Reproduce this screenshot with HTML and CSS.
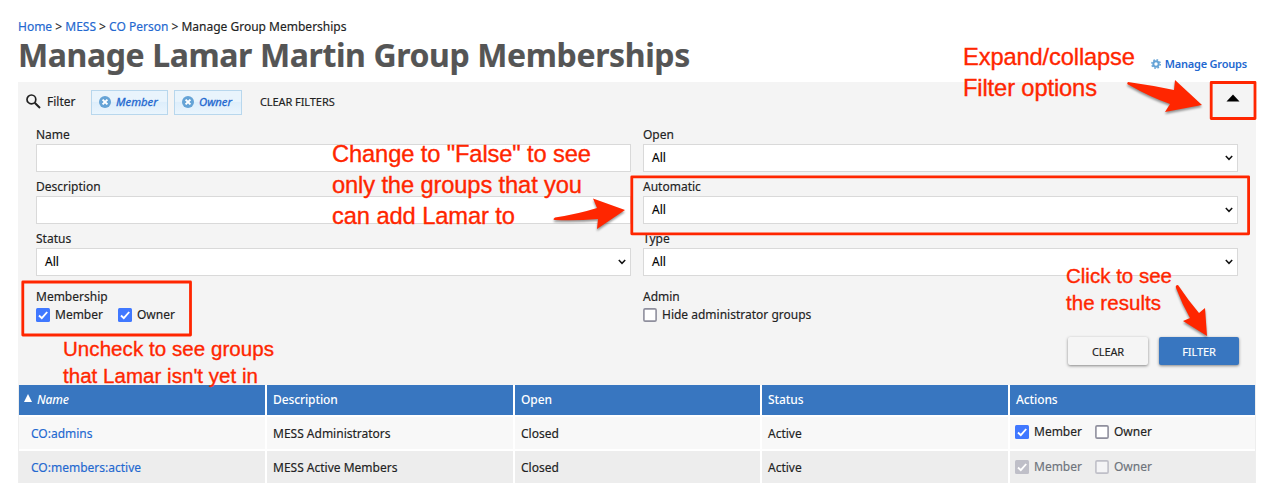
FILE: index.html
```html
<!DOCTYPE html>
<html lang="en">
<head>
<meta charset="utf-8">
<title>Manage Group Memberships</title>
<link rel="stylesheet" href="styles.css">
</head>
<body>
<svg class="defs" width="0" height="0" aria-hidden="true">
  <symbol id="on" viewBox="0 0 14 14"><rect width="14" height="14" rx="1.5" fill="currentColor"/><path d="M3 7.5l2.8 2.7L11.2 4" fill="none" stroke="#fff" stroke-width="1.9"/></symbol>
  <symbol id="off" viewBox="0 0 14 14"><rect x=".9" y=".9" width="12.2" height="12.2" rx="1.2" fill="var(--fill,#fff)" stroke="currentColor" stroke-width="1.6"/></symbol>
  <symbol id="chev" viewBox="0 0 8 6"><path d="M.8 1L4 4.3 7.2 1" fill="none" stroke="#111" stroke-width="1.5"/></symbol>
  <symbol id="close" viewBox="0 0 12 12"><circle cx="6" cy="6" r="6" fill="#65a3d6"/><path d="M3.6 3.6l4.8 4.8M8.4 3.6L3.6 8.4" stroke="#fff" stroke-width="2"/></symbol>
</svg>
<main class="page">
  <nav class="crumbs"><a>Home</a> &gt; <a>MESS</a> &gt; <a>CO Person</a> &gt; <span>Manage Group Memberships</span></nav>
  <header class="head">
    <h1>Manage Lamar Martin Group Memberships</h1>
    <a class="manage"><svg width="10" height="10" viewBox="0 0 10 10"><circle cx="5" cy="5" r="2.7" fill="none" stroke="#65a3d6" stroke-width="2"/><circle cx="5" cy="5" r="4.2" fill="none" stroke="#65a3d6" stroke-width="1.5" stroke-dasharray="1.65 1.65"/></svg>Manage Groups</a>
  </header>
  <section class="panel">
    <div class="bar">
      <svg class="search" width="15" height="15" viewBox="0 0 15 15"><circle cx="5.4" cy="5.4" r="4.4" fill="none" stroke="#222" stroke-width="1.7"/><path d="M8.7 8.7l5.3 5.3" stroke="#222" stroke-width="2"/></svg>
      <span class="filter-label">Filter</span>
      <span class="chip member"><svg width="12" height="12"><use href="#close"/></svg>Member</span>
      <span class="chip"><svg width="12" height="12"><use href="#close"/></svg>Owner</span>
      <span class="clear-all">CLEAR FILTERS</span>
      <svg class="caret" width="14" height="8" viewBox="0 0 14 8"><path d="M7 .5L13.5 7.5H.5z" fill="#000"/></svg>
    </div>
    <div class="fields">
      <div class="field"><label>Name</label><div class="box"></div></div>
      <div class="field"><label>Open</label><div class="box">All<svg width="8" height="6"><use href="#chev"/></svg></div></div>
      <div class="field"><label>Description</label><div class="box"></div></div>
      <div class="field"><label>Automatic</label><div class="box">All<svg width="8" height="6"><use href="#chev"/></svg></div></div>
      <div class="field"><label>Status</label><div class="box">All<svg width="8" height="6"><use href="#chev"/></svg></div></div>
      <div class="field"><label>Type</label><div class="box">All<svg width="8" height="6"><use href="#chev"/></svg></div></div>
      <div class="group"><label>Membership</label><div class="checks"><span class="check"><svg class="blue"><use href="#on"/></svg>Member</span><span class="check"><svg class="blue"><use href="#on"/></svg>Owner</span></div></div>
      <div class="group"><label>Admin</label><div class="checks"><span class="check"><svg><use href="#off"/></svg>Hide administrator groups</span></div></div>
    </div>
    <div class="buttons"><span class="btn">CLEAR</span><span class="btn primary">FILTER</span></div>
  </section>
  <section class="table">
    <div class="row th"><span class="sorted"><svg width="8" height="8" viewBox="0 0 8 8"><path d="M4 0l4 8H0z" fill="#fff"/></svg><i>Name</i></span><span>Description</span><span>Open</span><span>Status</span><span>Actions</span></div>
    <div class="row first"><span class="name">CO:admins</span><span>MESS Administrators</span><span>Closed</span><span>Active</span><span class="actions"><span class="check"><svg class="blue"><use href="#on"/></svg>Member</span><span class="check"><svg><use href="#off"/></svg>Owner</span></span></div>
    <div class="row alt"><span class="name">CO:members:active</span><span>MESS Active Members</span><span>Closed</span><span>Active</span><span class="actions disabled"><span class="check"><svg><use href="#on"/></svg>Member</span><span class="check"><svg><use href="#off"/></svg>Owner</span></span></div>
  </section>
</main>
<svg class="notes" width="1267" height="483" viewBox="0 0 1267 483">
  <g class="frames">
    <rect x="1211.2" y="82.5" width="43.8" height="36"/>
    <rect x="631.8" y="176.8" width="616.8" height="57"/>
    <rect x="22.8" y="282" width="167.7" height="53"/>
  </g>
  <g class="arrows">
    <path d="M1128 82Q1126 84 1129 85Q1150 97 1170 104L1165 112 1202 105 1175 80 1174 90Q1150 85 1128 82Z"/>
    <path d="M555 217.500Q552 219.500 555 220Q575 221 598 219L597 229 625 210 593 198.500 597 208Q578 214 555 217.500Z"/>
    <path d="M1178 285Q1175 285 1176 288Q1182 304 1190 318L1183 321 1207 336 1205 308 1199 313Q1188 300 1178 285Z"/>
  </g>
  <g class="big" lengthAdjust="spacing">
    <text x="963" y="65" textLength="172">Expand/collapse</text>
    <text x="963" y="96" textLength="134">Filter options</text>
    <text x="332" y="162" textLength="259">Change to "False" to see</text>
    <text x="332" y="193" textLength="250">only the groups that you</text>
    <text x="332" y="224" textLength="183">can add Lamar to</text>
  </g>
  <g class="small">
    <text x="1066" y="283" textLength="106">Click to see</text>
    <text x="1066" y="310" textLength="95">the results</text>
    <text x="63" y="356" textLength="211">Uncheck to see groups</text>
    <text x="63" y="383" textLength="195">that Lamar isn't yet in</text>
  </g>
</svg>
</body>
</html>
```
FILE: styles.css
```css
* { box-sizing: border-box; }
body { margin: 0; background: #fff; color: #222; font: 12px/16px "Noto Sans", sans-serif; overflow: hidden; -webkit-text-stroke: .15px currentColor; }
svg { display: block; flex: none; }
.defs { position: absolute; }
.page { width: 1256px; height: 483px; padding: 19px 0 0 18px; overflow: hidden; }
.crumbs { height: 16px; white-space: nowrap; }
a, .name { color: #2368d0; }
.head { display: flex; justify-content: space-between; height: 47px; }
h1 { margin: 0; font-size: 32px; line-height: 40px; font-weight: 700; letter-spacing: -.39px; color: #555; white-space: nowrap; }
.manage { display: flex; align-items: center; gap: 4px; height: 16px; margin: 21px 9px 0 0; font-size: 11px; font-weight: 600; letter-spacing: -.2px; white-space: nowrap; -webkit-text-stroke: 0; }
.panel { height: 303px; background: #f4f4f4; }
.bar { display: flex; align-items: center; height: 40px; padding: 0 16px 0 8px; }
.search { margin: -2px 6px 0 0; }
.filter-label { width: 44px; }
.chip { display: flex; align-items: center; gap: 5px; width: 68px; height: 25px; margin-right: 6px; padding-left: 7px; border: 1px solid #b8d7ed; background: linear-gradient(#e9f4fc 45%, #deeefb 50%, #eaf5fd); color: #2368d0; font-size: 11.3px; font-style: italic; -webkit-text-stroke-width: .3px; }
.chip.member { width: 77px; }
.clear-all { margin-left: 12px; font-size: 11px; letter-spacing: -.08px; }
.caret { margin: -8px 0 0 auto; width: 14px; }
.fields { display: grid; grid-template-columns: 595px 595px; column-gap: 12px; grid-auto-rows: 52px; padding: 4px 18px 0; height: 211px; }
.field label, .group label { display: block; height: 18px; line-height: 17px; }
.group label { height: 19px; }
.box { display: flex; align-items: center; justify-content: space-between; height: 28px; padding: 0 4px 0 8px; border: 1px solid #d9d9d9; background: #fff; color: #000; }
.group { padding-top: 6px; }
.checks { display: flex; gap: 15px; }
.check { display: flex; align-items: center; gap: 5px; height: 16px; white-space: nowrap; }
.check svg { width: 14px; height: 14px; color: #8f8f9d; }
.check svg.blue { color: #4078ff; }
.buttons { display: flex; justify-content: flex-end; gap: 11px; margin-top: 4px; padding-right: 17px; }
.btn { width: 80px; height: 28px; border-radius: 2px; text-align: center; font-size: 11px; line-height: 29px; letter-spacing: -.1px; background: #f5f5f5; box-shadow: 0 1px 3px rgba(0,0,0,.45); }
.btn.primary { color: #fff; background: #3876c0; }
.table { border: solid #eee; border-width: 0 1px; }
.row { display: grid; grid-template-columns: 246px 246px 245px 246px 245px; gap: 2px; height: 32px; margin-bottom: 2px; }
.row > span { display: flex; align-items: center; padding: 1px 0 0 6px; background: #f8f8f8; }
.row.alt > span { background: #ededed; }
.row > .name { padding-left: 12px; }
.row.th { height: 30px; color: #fff; font-weight: 500; -webkit-text-stroke: 0; letter-spacing: -.1px; }
.row.th > span { background: #3876c0; padding: 0 0 1px 6px; }
.row.th > .sorted { gap: 5px; padding-left: 5px; }
.sorted svg { margin-top: -3px; }
.row > .actions { padding: 0 0 2px 5px; gap: 13px; }
.row > .disabled { color: #6d747c; padding-bottom: 0; --fill: #f4f4f6; }
.disabled svg { color: #bfbfc8; }
.notes { position: absolute; left: 0; top: 0; fill: #ff2600; font-family: "Liberation Sans", sans-serif; -webkit-text-stroke: 0; }
.frames { fill: none; stroke: #ff2600; stroke-width: 2.8; stroke-linejoin: round; }
.notes text { stroke: #ff2600; stroke-width: .35; }
.arrows { filter: drop-shadow(0 2px 1px rgba(0,0,0,.4)); }
.big { font-size: 23.7px; }
.small { font-size: 20.5px; }
```
